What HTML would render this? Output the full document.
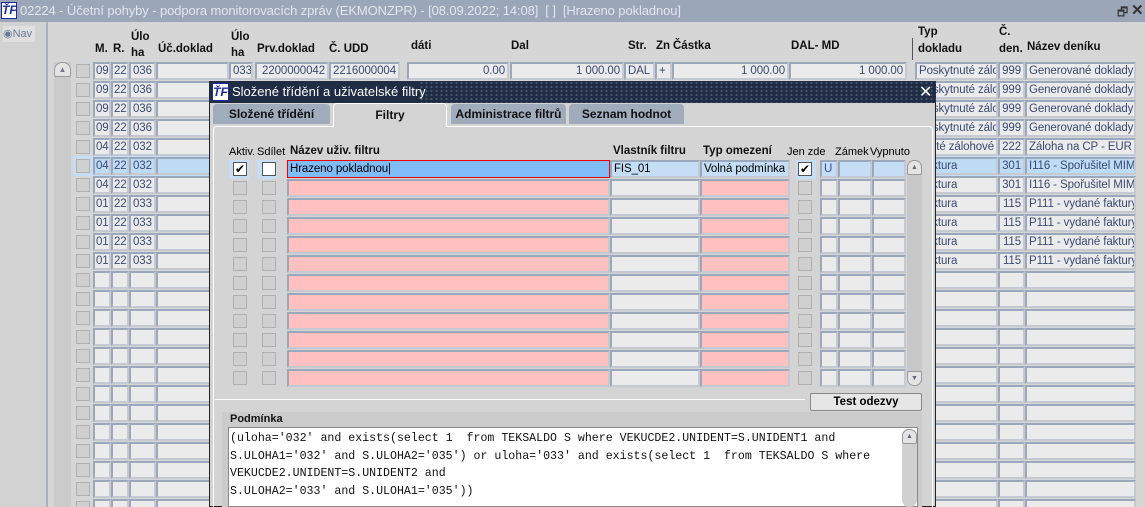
<!DOCTYPE html>
<html><head><meta charset="utf-8">
<style>
*{box-sizing:border-box;margin:0;padding:0}
html,body{width:1145px;height:507px;overflow:hidden}
body{background:#d6d6d6;font-family:"Liberation Sans",sans-serif;font-size:11px;position:relative}
.a{position:absolute}
.f{position:absolute;background:#ebebeb;border:2px solid #9ba7ba;border-right-color:#c4c9d2;border-bottom-color:#c4c9d2;height:18px;color:#3a4a72;font-size:11.5px;line-height:14px;padding:0 2px;white-space:nowrap;overflow:hidden;letter-spacing:-0.1px}
.cb{position:absolute;width:14px;height:14px;background:#d0d0d0;border:1px solid #b0b0b0}
.h{position:absolute;font-weight:bold;font-size:11.5px;color:#111;white-space:nowrap}
.pk{background:#ffc0c0}
.bl{background:#bfdcf7}
.r{text-align:right}
</style></head><body>
<div class="a" style="left:0;top:0;width:1145px;height:22px;background:#9ba6b8"></div>
<div class="a" style="left:1px;top:2px;width:16px;height:17px;background:#fff;border:1px solid #1a2a9a;color:#1a2aa0;font:bold italic 12px 'Liberation Sans';text-align:center;line-height:15px">ŤF</div>
<div class="a" style="left:20px;top:3px;color:#e2e6ee;font-size:13px;white-space:nowrap;letter-spacing:-0.1px">02224 - Účetní pohyby - podpora monitorovacích zpráv (EKMONZPR) - [08.09.2022; 14:08]&nbsp; [ ]&nbsp; [Hrazeno pokladnou]</div>
<div class="a" style="left:1117px;top:3px;color:#333;font-size:12px">🗗</div>
<div class="a" style="left:1131px;top:1px;color:#333;font-size:15px;font-weight:bold">✕</div>
<div class="a" style="left:0;top:22px;width:48px;height:485px;background:#d2d2d2;border-right:2px solid #a8b2c4"></div>
<div class="a" style="left:3px;top:26px;width:32px;height:16px;background:#e0e0e0;color:#6a7a9a;font-size:11px;line-height:16px">◉Nav</div>
<div class="a" style="left:54px;top:62px;width:17px;height:445px;background:#cbcbcb"></div>
<div class="a" style="left:54px;top:62px;width:17px;height:15px;background:#e4e4e4;border:1px solid #999;border-radius:8px 8px 2px 2px;font-size:8px;color:#778;text-align:center;line-height:13px">▲</div>
<div class="h" style="left:95px;top:43px">M.</div>
<div class="h" style="left:113px;top:43px">R.</div>
<div class="h" style="left:131px;top:29px;line-height:16px">Úlo<br>ha</div>
<div class="h" style="left:158px;top:43px">Úč.doklad</div>
<div class="h" style="left:231px;top:29px;line-height:16px">Úlo<br>ha</div>
<div class="h" style="left:257px;top:43px">Prv.doklad</div>
<div class="h" style="left:329px;top:43px">Č. UDD</div>
<div class="h" style="left:411px;top:40px">dáti</div>
<div class="h" style="left:511px;top:40px">Dal</div>
<div class="h" style="left:628px;top:40px">Str.</div>
<div class="h" style="left:656px;top:40px">Zn</div>
<div class="h" style="left:673px;top:40px">Částka</div>
<div class="h" style="left:791px;top:40px">DAL- MD</div>
<div class="a" style="left:912px;top:38px;width:1px;height:22px;background:#555"></div>
<div class="h" style="left:918px;top:24px;line-height:17px">Typ<br>dokladu</div>
<div class="h" style="left:999px;top:24px;line-height:17px">Č.<br>den.</div>
<div class="h" style="left:1027px;top:41px">Název deníku</div>
<div id="grid"></div>
<div class="a" style="left:209px;top:81px;width:727px;height:426px;background:#d4d4d4;border:1px solid #222"></div>
<div class="a" style="left:209px;top:81px;width:727px;height:22px;background:#1f2c44;background-image:radial-gradient(#6a7590 0.8px,transparent 1px);background-size:5px 4px"></div>
<div class="a" style="left:209px;top:81px;width:210px;height:22px;background:#1f2c44"></div>
<div class="a" style="left:212px;top:83px;width:17px;height:18px;background:#fff;border:1px solid #1a2a9a;color:#1a2aa0;font:bold italic 12px 'Liberation Sans';text-align:center;line-height:16px">ŤF</div>
<div class="a" style="left:232px;top:84px;color:#fff;font-size:13px;white-space:nowrap">Složené třídění a uživatelské filtry</div>
<div class="a" style="left:919px;top:82px;color:#fff;font-size:16px">✕</div>
<div class="a" style="left:213px;top:104px;width:117px;height:20px;background:#a0abbc;border-radius:4px 4px 0 0;font-weight:bold;text-align:center;line-height:20px;color:#111;font-size:12px">Složené třídění</div>
<div class="a" style="left:333px;top:103px;width:114px;height:24px;background:#d4d4d4;border:1px solid #fff;border-bottom:none;border-radius:4px 4px 0 0;font-weight:bold;text-align:center;line-height:22px;color:#111;font-size:12px">Filtry</div>
<div class="a" style="left:451px;top:104px;width:115px;height:20px;background:#a0abbc;border-radius:4px 4px 0 0;font-weight:bold;text-align:center;line-height:20px;color:#111;font-size:12px">Administrace filtrů</div>
<div class="a" style="left:569px;top:104px;width:115px;height:20px;background:#a0abbc;border-radius:4px 4px 0 0;font-weight:bold;text-align:center;line-height:20px;color:#111;font-size:12px">Seznam hodnot</div>
<div class="a" style="left:213px;top:126px;width:720px;height:381px;border:1px solid #fff;border-bottom:none;border-radius:4px 4px 0 0"></div>
<div class="a" style="left:334px;top:125px;width:112px;height:3px;background:#d4d4d4"></div>
<div class="a" style="left:229px;top:146px;font-size:11px">Aktiv.</div>
<div class="a" style="left:257px;top:146px;font-size:11px">Sdílet</div>
<div class="h" style="left:290px;top:145px">Název uživ. filtru</div>
<div class="h" style="left:613px;top:145px">Vlastník filtru</div>
<div class="h" style="left:703px;top:145px">Typ omezení</div>
<div class="a" style="left:787px;top:146px;font-size:11px">Jen zde</div>
<div class="a" style="left:835px;top:146px;font-size:11px">Zámek</div>
<div class="a" style="left:870px;top:146px;font-size:11px">Vypnuto</div>
<div id="frows"></div>
<div class="a" style="left:907px;top:160px;width:15px;height:226px;background:#c8c8c8;border-radius:7px"></div>
<div class="a" style="left:907px;top:160px;width:15px;height:15px;background:#e4e4e4;border:1px solid #999;border-radius:7px 7px 2px 2px;font-size:7px;color:#667;text-align:center;line-height:13px">▲</div>
<div class="a" style="left:907px;top:371px;width:15px;height:15px;background:#e4e4e4;border:1px solid #999;border-radius:2px 2px 7px 7px;font-size:7px;color:#667;text-align:center;line-height:13px">▼</div>
<div class="a" style="left:215px;top:399px;width:590px;height:1px;background:#777;border-bottom:1px solid #fff"></div>
<div class="a" style="left:810px;top:393px;width:112px;height:18px;background:#e6e6e6;border:1px solid #888;border-radius:2px;font-weight:bold;text-align:center;line-height:16px;font-size:11.5px">Test odezvy</div>
<div class="a" style="left:222px;top:412px;width:700px;height:95px;background:#cbcbcb"></div>
<div class="h" style="left:230px;top:413px;font-size:11px">Podmínka</div>
<div class="a" style="left:228px;top:427px;width:690px;height:80px;background:#fff;border:1px solid #888"></div>
<div class="a" style="left:230px;top:430px;font-family:'Liberation Mono',monospace;font-size:11.6px;line-height:17.5px;white-space:pre;color:#111">(uloha='032' and exists(select 1  from TEKSALDO S where VEKUCDE2.UNIDENT=S.UNIDENT1 and
S.ULOHA1='032' and S.ULOHA2='035') or uloha='033' and exists(select 1  from TEKSALDO S where
VEKUCDE2.UNIDENT=S.UNIDENT2 and
S.ULOHA2='033' and S.ULOHA1='035'))</div>
<div class="a" style="left:902px;top:429px;width:15px;height:78px;background:#d0d0d0;border-radius:7px"></div>
<div class="a" style="left:902px;top:429px;width:15px;height:15px;background:#e4e4e4;border:1px solid #999;border-radius:7px 7px 2px 2px;font-size:7px;color:#667;text-align:center;line-height:13px">▲</div>
<script>
var g='';
function f(x,w,y,t,cls,st){g+='<div class="f '+(cls||'')+'" style="left:'+x+'px;top:'+y+'px;width:'+w+'px;'+(st||'')+'">'+(t||'')+'</div>';}
var data=[
['09','22','036','Poskytnuté zálo','999','Generované doklady -'],
['09','22','036','Poskytnuté zálo','999','Generované doklady -'],
['09','22','036','Poskytnuté zálo','999','Generované doklady -'],
['09','22','036','Poskytnuté zálo','999','Generované doklady -'],
['04','22','032','Poskytnuté zálohové','222','Záloha na CP - EUR'],
['04','22','032','Faktura','301','I116 - Spořušitel MIMO'],
['04','22','032','Faktura','301','I116 - Spořušitel MIMO'],
['01','22','033','Faktura','115','P111 - vydané faktury'],
['01','22','033','Faktura','115','P111 - vydané faktury'],
['01','22','033','Faktura','115','P111 - vydané faktury'],
['01','22','033','Faktura','115','P111 - vydané faktury']];
for(var i=0;i<24;i++){
 var y=62+i*19, d=data[i]||['','','','','',''], c=(i==5)?'bl':'';
 if(i==5) g+='<div class="a" style="left:73px;top:'+(y-1)+'px;width:1062px;height:20px;background:#c6def5"></div>';
 g+='<div class="cb" style="left:76px;top:'+(y+2)+'px"></div>';
 f(93,18,y,d[0],c,'padding:0 1px');f(111,18,y,d[1],c,'padding:0 1px');f(129,27,y,d[2],c);f(156,73,y,'',c);
 if(i==0){f(229,24,y,'033');f(255,74,y,'2200000042','r');f(329,71,y,'2216000004','r');f(407,102,y,'0.00','r');f(510,114,y,'1 000.00','r');f(624,31,y,'DAL');f(655,17,y,'+');f(672,117,y,'1 000.00','r');f(789,118,y,'1 000.00','r');}
 else {f(229,24,y,'',c);f(255,74,y,'',c);f(329,71,y,'',c);f(407,102,y,'',c);f(510,114,y,'',c);f(624,31,y,'',c);f(655,17,y,'',c);f(672,117,y,'',c);f(789,118,y,'',c);}
 var t=d[3]; f(915,83,y,t,c,(i==4?'direction:rtl;text-align:left;':''));
 f(998,27,y,d[4],c,'text-align:right;');f(1025,111,y,d[5],c);
}
document.getElementById('grid').innerHTML=g;
g='';
for(var i=0;i<12;i++){
 var y=160+i*19;
 if(i==0){
  g+='<div class="a" style="left:229px;top:'+y+'px;width:20px;height:19px;background:#c6def5"></div><div class="a" style="left:257px;top:'+y+'px;width:20px;height:19px;background:#c6def5"></div>';
  g+='<div class="cb" style="left:233px;top:'+(y+2)+'px;background:#fff;border-color:#555;font-size:12px;line-height:12px;text-align:center">✔</div>';
  g+='<div class="cb" style="left:262px;top:'+(y+2)+'px;background:#fff;border-color:#555"></div>';
  g+='<div class="f" style="left:287px;top:'+y+'px;width:323px;background:#7fbcf8;border:1px solid #e00;color:#000;line-height:16px">Hrazeno pokladnou|</div>';
  f(610,90,y,'FIS_01','','background:#c6def5;color:#000');f(700,90,y,'Volná podmínka','','background:#c6def5;color:#000');
  g+='<div class="a" style="left:796px;top:'+y+'px;width:20px;height:19px;background:#c6def5"></div><div class="cb" style="left:798px;top:'+(y+2)+'px;background:#fff;border-color:#555;font-size:12px;line-height:12px;text-align:center">✔</div>';
  f(820,18,y,'U','','background:#c6def5;color:#3a4a9a');f(838,34,y,'','','background:#c6def5');f(872,34,y,'','','background:#c6def5');
 } else {
  g+='<div class="cb" style="left:233px;top:'+(y+2)+'px"></div><div class="cb" style="left:262px;top:'+(y+2)+'px"></div>';
  f(287,323,y,'','pk');f(610,90,y,'');f(700,90,y,'','pk');
  g+='<div class="cb" style="left:798px;top:'+(y+2)+'px"></div>';
  f(820,18,y,'');f(838,34,y,'');f(872,34,y,'');
 }
}
document.getElementById('frows').innerHTML=g;
</script>
</body></html>
